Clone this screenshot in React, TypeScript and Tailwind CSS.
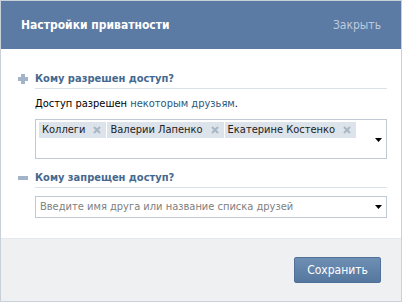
import { useState } from "react";

const FONT = "font-['DejaVu_Sans_Condensed','DejaVu_Sans',sans-serif]";

const ALLOWED = ["Коллеги", "Валерии Лапенко", "Екатерине Костенко"];

function PlusIcon() {
  return (
    <svg width="10" height="10" viewBox="0 0 10 10" className="shrink-0">
      <rect x="3" y="0" width="4" height="10" fill="#a4b4c8" />
      <rect x="0" y="3" width="10" height="4" fill="#a4b4c8" />
    </svg>
  );
}

function MinusIcon() {
  return (
    <svg width="10" height="10" viewBox="0 0 10 10" className="shrink-0">
      <rect x="0" y="3" width="10" height="4" fill="#a4b4c8" />
    </svg>
  );
}

function Arrow() {
  return (
    <svg width="7" height="4" viewBox="0 0 7 4" className="shrink-0">
      <path d="M0 0H7L3.5 4Z" fill="#000" />
    </svg>
  );
}

function Cross() {
  return (
    <svg width="8" height="8" viewBox="0 0 8 8">
      <path d="M1 1L7 7M7 1L1 7" stroke="#a9b6c4" strokeWidth="2" />
    </svg>
  );
}

function SectionTitle({ icon, children }: { icon: React.ReactNode; children: React.ReactNode }) {
  return (
    <div className="flex items-start">
      <div className="mt-[2px] w-[17px]">{icon}</div>
      <div className="flex-1 border-b border-[#dae1e8] pb-[3px] text-[11px] leading-[13px] font-bold text-[#45688e]">
        {children}
      </div>
    </div>
  );
}

export default function App() {
  const [friends, setFriends] = useState(ALLOWED);

  return (
    <div className={`${FONT} flex h-[302px] w-[402px] flex-col border border-[#c9d0d8] bg-white`}>
      <div className="flex h-[48px] shrink-0 items-center justify-between bg-[#5b7aa4] px-[20px]">
        <span className="text-[12px] font-bold text-white">Настройки приватности</span>
        <span className="text-[12px] text-[#bccbde]">Закрыть</span>
      </div>

      <div className="flex-1 pl-[17px] pr-[14px] pt-[23px]">
        <SectionTitle icon={<PlusIcon />}>Кому разрешен доступ?</SectionTitle>
        <div className="ml-[17px] mt-[8px] text-[11px] leading-[13px] text-black">
          Доступ разрешен <span className="text-[#2b587a]">некоторым друзьям</span>.
        </div>
        <div className="ml-[17px] mt-[9px] flex h-[40px] items-start border border-[#c0cad5] pl-[3px] pr-[4px] pt-[2px]">
          <div className="flex flex-1 flex-wrap gap-[1px]">
            {friends.map((name) => (
              <span
                key={name}
                className="flex h-[16px] items-center gap-[8px] bg-[#dde3ea] pl-[3px] pr-[5px] text-[11px] text-[#222]"
              >
                {name}
                <button
                  type="button"
                  onClick={() => setFriends((cur) => cur.filter((f) => f !== name))}
                  className="flex items-center"
                >
                  <Cross />
                </button>
              </span>
            ))}
          </div>
          <div className="self-center">
            <Arrow />
          </div>
        </div>

        <div className="mt-[12px]">
          <SectionTitle icon={<MinusIcon />}>Кому запрещен доступ?</SectionTitle>
        </div>
        <div className="ml-[17px] mt-[8px] flex h-[22px] items-center border border-[#c0cad5] pl-[4px] pr-[4px]">
          <span className="flex-1 text-[11px] text-[#808080]">Введите имя друга или название списка друзей</span>
          <Arrow />
        </div>
      </div>

      <div className="flex h-[63px] shrink-0 items-start justify-end border-t border-[#e4e8ec] bg-[#eef0f2] pr-[20px] pt-[18px]">
        <button
          type="button"
          className="h-[26px] w-[87px] rounded-[2px] border border-[#50729a] bg-gradient-to-b from-[#6f8fb4] to-[#55779e] text-[12px] text-white"
        >
          Сохранить
        </button>
      </div>
    </div>
  );
}
